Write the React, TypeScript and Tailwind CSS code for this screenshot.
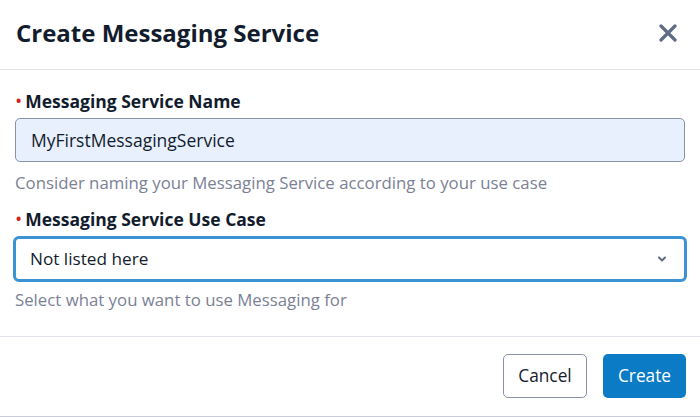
import React from 'react'

export default function App() {
  return (
    <div className="w-[700px] h-[417px] bg-white flex flex-col border-b border-[#cacdd8] overflow-hidden" style={{ fontFamily: '"Open Sans", "Noto Sans", sans-serif' }}>
      <div className="h-[70px] flex items-center justify-between pl-4 pr-[18px] pb-[3px] border-b border-[#e1e3ea] shrink-0">
        <h2 className="text-[24px] font-bold text-[#121c2d]">Create Messaging Service</h2>
        <button className="w-7 h-7 flex items-center justify-center text-[#606b85]">
          <svg width="18" height="18" viewBox="0 0 18 18" fill="none" stroke="currentColor" strokeWidth="3.2" strokeLinecap="round">
            <path d="M2 2 L16 16 M16 2 L2 16" />
          </svg>
        </button>
      </div>

      <div className="flex-1 px-[14px] pt-[19px]">
        <label className="flex items-center text-[17.5px] font-bold text-[#121c2d] leading-[24px]">
          <span className="text-[#d61f1f] text-[14px] mr-[4px] ml-[2px]">•</span>
          Messaging Service Name
        </label>
        <div className="mt-[5px] h-[44px] mx-[1px] rounded-[5px] border border-[#8891aa] bg-[#e8f0fe] flex items-center px-[15px] text-[17.5px] text-[#121c2d]">
          MyFirstMessagingService
        </div>
        <p className="mt-[10px] text-[16.8px] text-[#7b8195] leading-[22px] ml-[1px]">Consider naming your Messaging Service according to your use case</p>

        <label className="mt-[13px] flex items-center text-[17.5px] font-bold text-[#121c2d] leading-[24px]">
          <span className="text-[#d61f1f] text-[14px] mr-[4px] ml-[2px]">•</span>
          Messaging Service Use Case
        </label>
        <div className="mt-[5px] h-[46px] -mx-[1px] rounded-[6px] border-[3px] border-[#3c93d4] bg-white flex items-center justify-between pl-[14px] pr-[16px] text-[17.2px] text-[#121c2d]">
          <span>Not listed here</span>
          <svg width="12" height="12" viewBox="0 0 12 12" fill="none" stroke="#606b85" strokeWidth="2" strokeLinecap="round" strokeLinejoin="round">
            <path d="M3 4.5 L6 7.5 L9 4.5" />
          </svg>
        </div>
        <p className="mt-[7px] text-[16.8px] text-[#7b8195] leading-[22px] ml-[1px]">Select what you want to use Messaging for</p>
      </div>

      <div className="h-[80px] border-t border-[#e1e3ea] flex items-center justify-end gap-[16px] pr-[14px] pb-[1px] shrink-0">
        <button className="h-[44px] w-[84px] rounded-[5px] border border-[#8891aa] bg-white text-[17.3px] text-[#121c2d]">Cancel</button>
        <button className="h-[44px] w-[83px] rounded-[5px] bg-[#0b7bc6] text-[17.3px] text-white">Create</button>
      </div>
    </div>
  )
}
